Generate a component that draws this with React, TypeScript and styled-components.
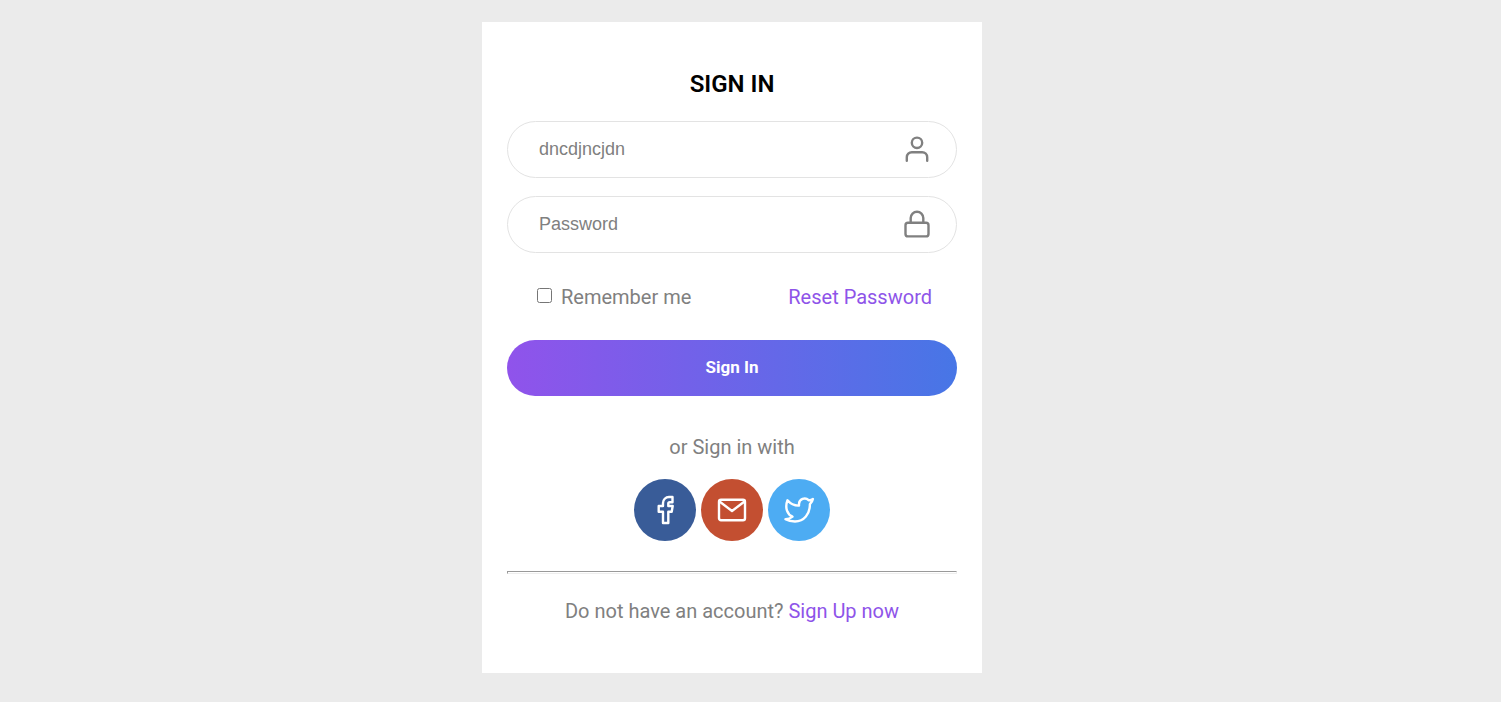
import React from 'react';
import styled, { createGlobalStyle } from 'styled-components';

const GlobalStyle = createGlobalStyle`
  * { box-sizing: border-box; }
  body {
    margin: 0;
    background: #ebebeb;
    font-family: Roboto, sans-serif;
    font-size: 20px;
    line-height: 24px;
    color: #808080;
  }
`;

const Page = styled.main`
  display: flex;
  justify-content: center;
  padding: 22px 37px 29px 0;
`;

const Card = styled.form`
  width: 100%;
  max-width: 500px;
  padding: 48px 25px 50px;
  background: #fff;
`;

const Title = styled.h1`
  margin: 0 0 23px;
  font-size: 24px;
  line-height: 28px;
  font-weight: 600;
  color: #000;
  text-align: center;
`;

const Field = styled.label`
  display: flex;
  align-items: center;
  height: 57px;
  margin-bottom: 18px;
  padding: 0 23px 0 31px;
  border: 1px solid #e3e3e3;
  border-radius: 29px;
`;

const FieldInput = styled.input`
  flex: 1;
  min-width: 0;
  padding: 0;
  border: 0;
  outline: 0;
  background: transparent;
  font-family: "Liberation Sans", Arial, sans-serif;
  font-size: 18px;
  color: #808080;
  &::placeholder { color: #808080; opacity: 1; }
`;

const Icon = styled.svg`
  display: block;
  width: 32px;
  height: 32px;
  fill: none;
  stroke: currentColor;
  stroke-width: 2.4;
  stroke-linecap: round;
  stroke-linejoin: round;
`;

const Options = styled.div`
  display: flex;
  justify-content: space-between;
  align-items: center;
  margin: 32px 25px 31px 30px;
`;

const Remember = styled.label`
  display: flex;
  align-items: center;
  gap: 9px;
`;

const Checkbox = styled.input`
  width: 15px;
  height: 15px;
  margin: 0 0 3px;
`;

const Link = styled.a`
  color: #8e54e9;
  text-decoration: none;
`;

const Submit = styled.button`
  display: block;
  width: 100%;
  height: 56px;
  padding: 0 0 2px;
  border: 0;
  border-radius: 28px;
  background: linear-gradient(to right, #9053eb, #4776e6);
  font-family: Roboto, sans-serif;
  font-size: 17px;
  font-weight: 700;
  color: #fff;
`;

const Alternative = styled.p`
  margin: 39px 0 20px;
  text-align: center;
`;

const Socials = styled.div`
  display: flex;
  justify-content: center;
  gap: 5px;
`;

const SocialLink = styled.a<{ $color: string }>`
  display: flex;
  align-items: center;
  justify-content: center;
  width: 62px;
  height: 62px;
  border-radius: 50%;
  background: ${({ $color }) => $color};
  color: #fff;
`;

const Divider = styled.hr`
  margin: 30px 0 25px;
  height: 3px;
  border: 1px solid;
  border-color: #9a9a9a #eee #eee #9a9a9a;
`;

const SignUp = styled.p`
  margin: 0;
  text-align: center;
`;

export default function App() {
  return (
    <>
      <GlobalStyle />
      <Page>
        <Card>
          <Title>SIGN IN</Title>
          <Field>
            <FieldInput type="text" placeholder="dncdjncjdn" aria-label="Username" />
            <Icon viewBox="0 0 32 32" aria-hidden="true">
              <circle cx="16" cy="8.8" r="5.2" />
              <path d="M5.800 26.700v-3.500a5 5 0 0 1 5-5h10.400a5 5 0 0 1 5 5v3.500" />
            </Icon>
          </Field>
          <Field>
            <FieldInput type="password" placeholder="Password" aria-label="Password" />
            <Icon viewBox="0 0 32 32" aria-hidden="true">
              <rect x="4.500" y="13.700" width="23" height="13.700" rx="2.500" />
              <path d="M9.700 13.700v-4.700a6.300 6.300 0 0 1 12.600 0v4.700" />
            </Icon>
          </Field>
          <Options>
            <Remember>
              <Checkbox type="checkbox" />
              Remember me
            </Remember>
            <Link href="#reset">Reset Password</Link>
          </Options>
          <Submit type="button">Sign In</Submit>
          <Alternative>or Sign in with</Alternative>
          <Socials>
            <SocialLink href="#facebook" aria-label="Facebook" $color="#395c98">
              <Icon viewBox="0 0 32 32" aria-hidden="true">
                <path d="M23.500 3h-3.500a6 6 0 0 0-6 6v3h-4.300v5.800H14v11.200h5.300V17.800h3.400l1-5.800h-4.400v-2.400a1.400 1.400 0 0 1 1.400-1.400h2.800z" />
              </Icon>
            </SocialLink>
            <SocialLink href="#email" aria-label="Email" $color="#c34f31">
              <Icon viewBox="0 0 32 32" aria-hidden="true">
                <rect x="3" y="5.800" width="26" height="20.500" rx="2" />
                <path d="M3.500 7.500l12.500 9.500L28.500 7.500" />
              </Icon>
            </SocialLink>
            <SocialLink href="#twitter" aria-label="Twitter" $color="#4dacf3">
              <Icon viewBox="0 0 32 32" aria-hidden="true">
                <path d="M4.500 6.300c3 3.500 6.500 5.500 11.500 5.300v-1.600a5.600 5.600 0 0 1 9.600-3.800c1.600.3 3-.2 4.300-1.200-.4 2.200-1.600 3.800-3 5.200C27 20 21 27.500 12 27.500c-4 0-7-.8-9.500-2.300 3 0 5.200-.9 7-2.500C4.500 20.500 1.500 14 4.500 6.300z" />
              </Icon>
            </SocialLink>
          </Socials>
          <Divider />
          <SignUp>
            Do not have an account? <Link href="#signup">Sign Up now</Link>
          </SignUp>
        </Card>
      </Page>
    </>
  );
}
